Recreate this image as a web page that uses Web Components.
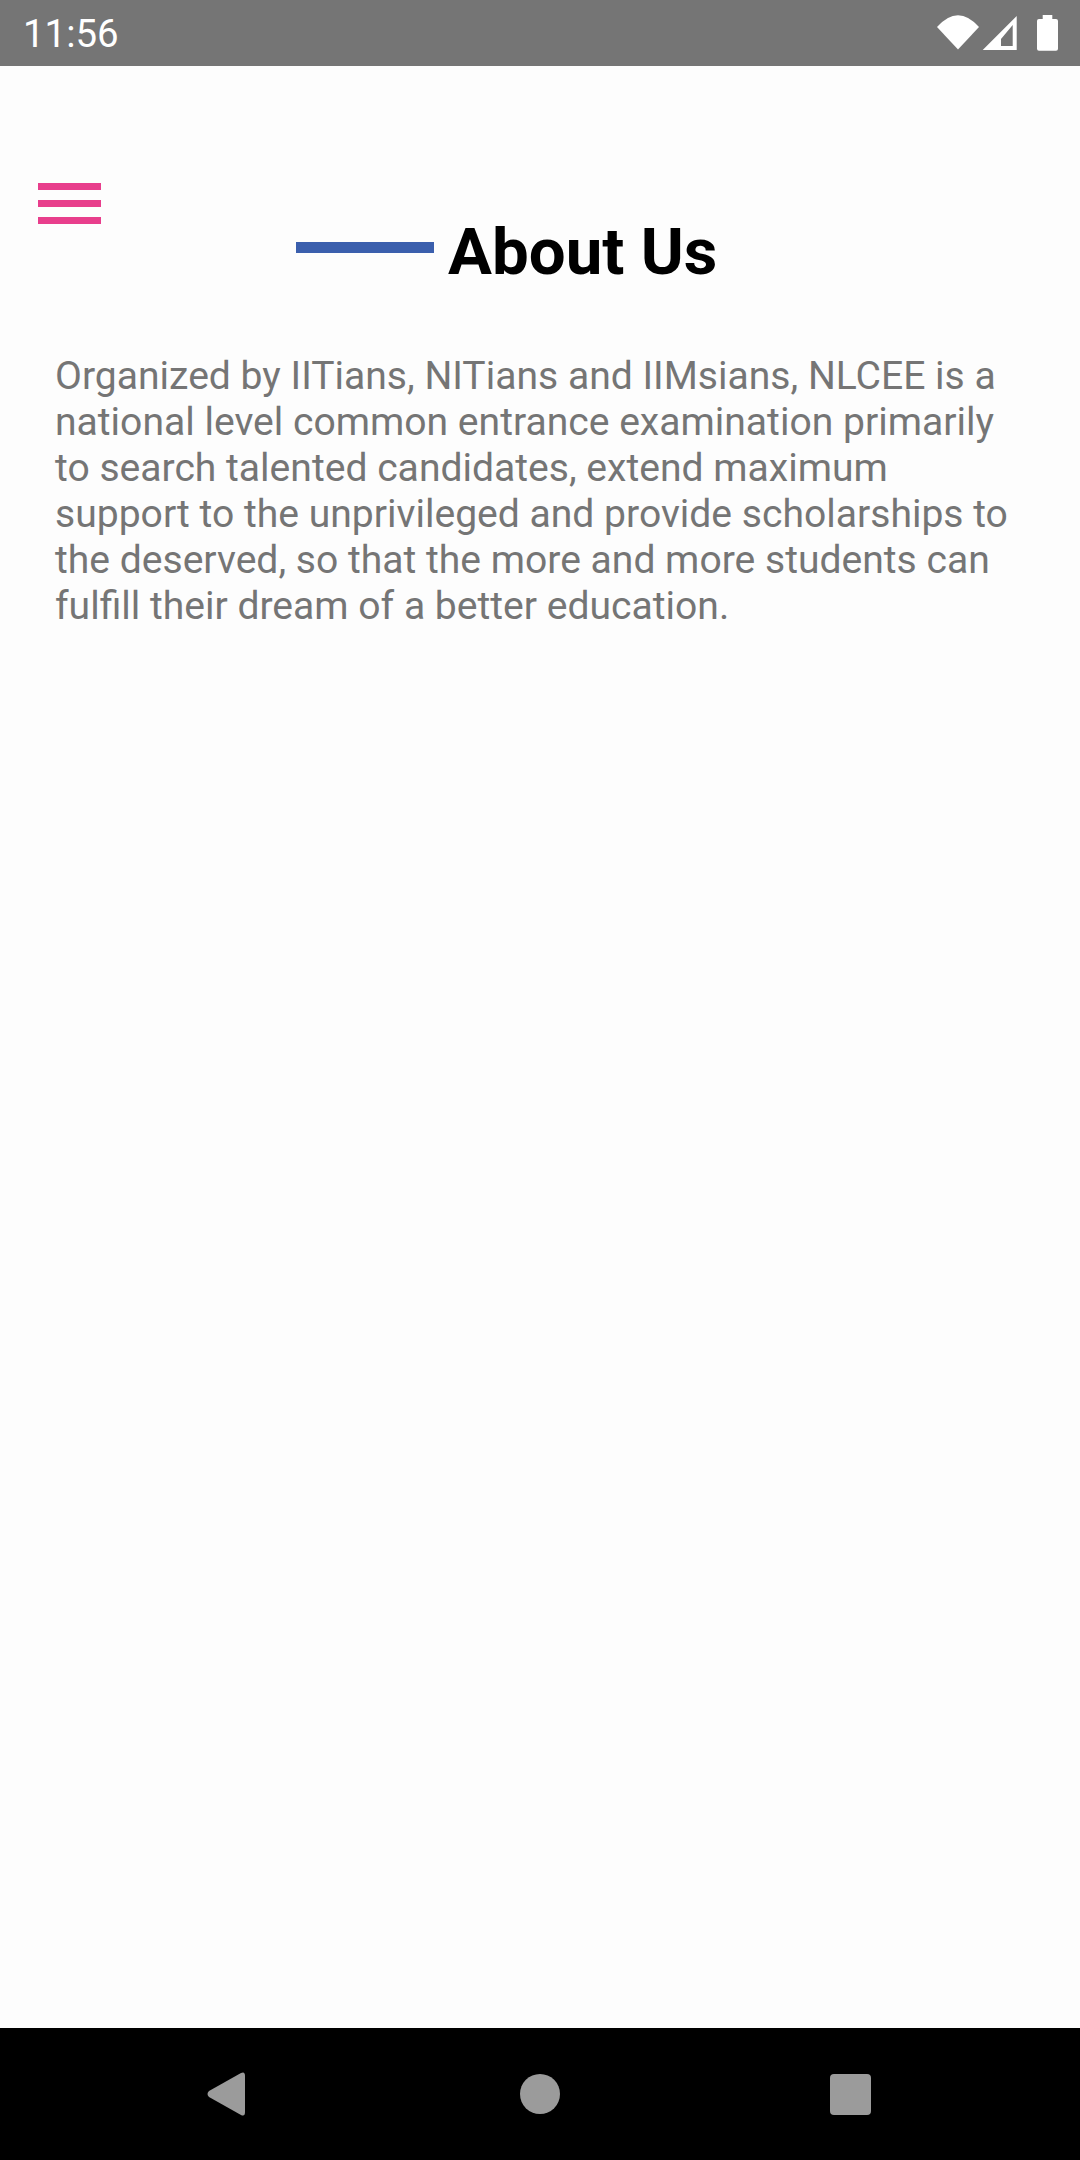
<!DOCTYPE html>
<html><head><meta charset="utf-8"><style>
html,body{margin:0;padding:0;background:#fdfdfd}
body{width:1080px;height:2160px;overflow:hidden;font-family:Roboto,sans-serif}
app-screen{height:2160px}
</style></head><body>
<app-screen>
<status-bar time="11:56"></status-bar>
<main-area>
<menu-button></menu-button>
<page-title>About Us</page-title>
<page-text>Organized by IITians, NITians and IIMsians, NLCEE is a national level common entrance examination primarily to search talented candidates, extend maximum support to the unprivileged and provide scholarships to the deserved, so that the more and more students can fulfill their dream of a better education.</page-text>
</main-area>
<nav-bar></nav-bar>
</app-screen>
<script>
function def(name,html,init){customElements.define(name,class extends HTMLElement{constructor(){super();this.attachShadow({mode:'open'}).innerHTML=html;if(init)init(this)}})}
def('app-screen',`<style>:host{display:flex;flex-direction:column;width:1080px;background:#fdfdfd}</style><slot></slot>`);
def('status-bar',`<style>:host{display:block;position:relative;height:66px;background:#757575;color:#fff}
span{display:block;padding:1px 0 0 23px;font:38.4px/66px Roboto,sans-serif;height:65px}
svg{position:absolute;left:0;top:0}</style><span id="t"></span>
<svg width="1080" height="66" viewBox="0 0 1080 66" fill="#fff">
<path d="M937 27Q958 3.500 979 27L958 49.500Z"/>
<path fill-rule="evenodd" d="M1016.700 16V50H982.700ZM1012.700 25L1001 39V46H1012.700Z"/>
<path d="M1039 19h3.700v-4h9.600v4h3.700a2 2 0 0 1 2 2v27.700a2 2 0 0 1-2 2h-17a2 2 0 0 1-2-2V21a2 2 0 0 1 2-2Z"/>
</svg>`,e=>e.shadowRoot.getElementById('t').textContent=e.getAttribute('time'));
def('main-area',`<style>:host{display:block;box-sizing:border-box;padding-top:117px;height:1962px}</style><slot></slot>`);
def('menu-button',`<style>:host{display:flex;flex-direction:column;gap:10.2px;width:62.500px;margin-left:38px;height:41px;margin-bottom:-10px}
i{display:block;height:7px;background:#e83e8c}</style><i></i><i></i><i></i>`);
def('page-title',`<style>:host{display:flex;align-items:flex-start;margin-left:296px;gap:14px;font:700 65.4px/76px Roboto,sans-serif;color:#000}
i{width:138px;height:11px;background:#3b5fad;margin-top:28px}</style><i></i><span><slot></slot></span>`);
def('page-text',`<style>:host{display:block;margin:63px 0 0 55px;width:970px;font:39.1px/46px Roboto,sans-serif;color:#757575}</style><slot></slot>`);
def('nav-bar',`<style>:host{display:block;height:132px;background:#000}svg{display:block}</style>
<svg width="1080" height="132" viewBox="0 0 1080 132" fill="#9b9b9b">
<path d="M241 45Q245 43 245 48V84Q245 89 241 87L209 69Q206 66 209 63Z"/>
<circle cx="540" cy="66" r="20"/>
<rect x="830" y="46" width="41" height="41" rx="4"/>
</svg>`);
</script>
</body></html>
